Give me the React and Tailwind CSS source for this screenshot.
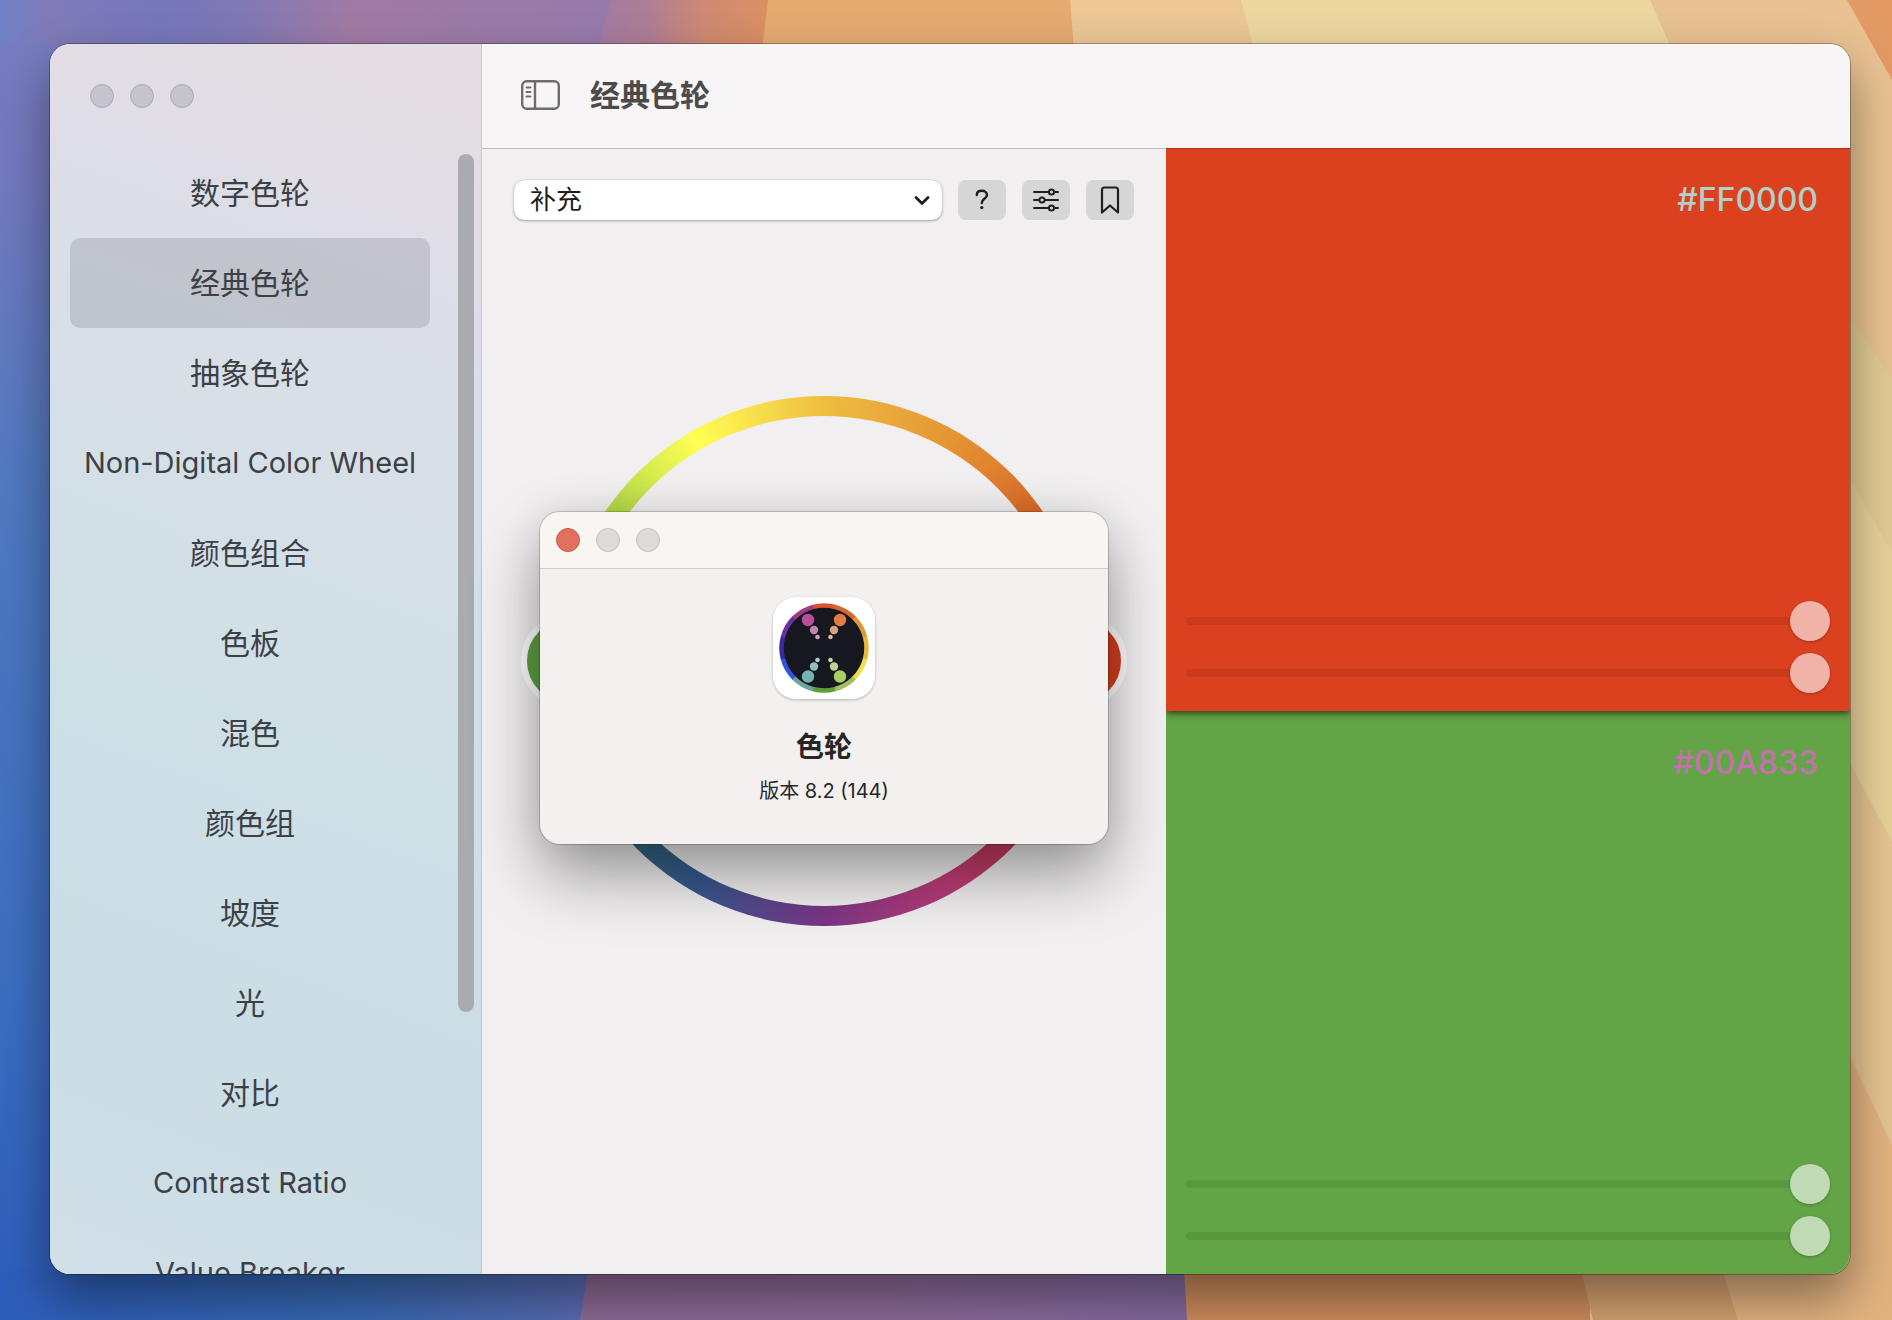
import React from 'react';

const sections = [
  '数字色轮',
  '经典色轮',
  '抽象色轮',
  'Non-Digital Color Wheel',
  '颜色组合',
  '色板',
  '混色',
  '颜色组',
  '坡度',
  '光',
  '对比',
  'Contrast Ratio',
  'Value Breaker',
];

const Wallpaper = () => (
  <svg className="absolute inset-0 w-full h-full" viewBox="0 0 1892 1320" preserveAspectRatio="none" aria-hidden="true">
    <defs>
      <linearGradient id="wpTop" x1="0" x2="1" y1="0" y2="0">
        <stop offset="0" stopColor="#6f80c4" />
        <stop offset="0.08" stopColor="#807ab8" />
        <stop offset="0.25" stopColor="#7677bc" />
        <stop offset="0.38" stopColor="#8078b4" />
        <stop offset="0.55" stopColor="#a07ba4" />
        <stop offset="1" stopColor="#957aac" />
      </linearGradient>
      <linearGradient id="wpDusk" x1="0" x2="1" y1="0" y2="0">
        <stop offset="0" stopColor="#a27ba2" />
        <stop offset="0.3" stopColor="#b07e94" />
        <stop offset="0.6" stopColor="#d08a72" />
        <stop offset="1" stopColor="#dd9160" />
      </linearGradient>
      <linearGradient id="wpLeft" x1="0" x2="0" y1="0" y2="1">
        <stop offset="0" stopColor="#767cbf" />
        <stop offset="0.1" stopColor="#7479be" />
        <stop offset="0.35" stopColor="#5079c0" />
        <stop offset="0.75" stopColor="#3b6dc0" />
        <stop offset="1" stopColor="#2d5dba" />
      </linearGradient>
      <linearGradient id="wpBottom" x1="0" x2="1" y1="0" y2="0">
        <stop offset="0" stopColor="#2d5dba" />
        <stop offset="0.6" stopColor="#3769b2" />
        <stop offset="1" stopColor="#5a6cb2" />
      </linearGradient>
      <linearGradient id="wpPurple" x1="0" x2="1" y1="0" y2="0">
        <stop offset="0" stopColor="#8c6a94" />
        <stop offset="0.5" stopColor="#8d6b98" />
        <stop offset="1" stopColor="#836aa0" />
      </linearGradient>
    </defs>
    <rect width="1892" height="1320" fill="#e8c292" />
    <rect width="640" height="60" fill="url(#wpTop)" />
    <path d="M0 44H60V1320H0Z" fill="url(#wpLeft)" />
    <path d="M0 1270H590V1320H0Z" fill="url(#wpBottom)" />
    <path d="M612 0H780V50H596Z" fill="url(#wpDusk)" />
    <path d="M768 0H1075V50H762Z" fill="#e5aa70" />
    <path d="M1070 0H1245L1255 50H1074Z" fill="#ebc795" />
    <path d="M1241 0H1650L1672 50H1254Z" fill="#edd7a0" />
    <path d="M1847 0H1892V80Z" fill="#e39a65" />
    <path d="M1840 300 1892 379V553L1840 460Z" fill="#e2cb96" />
    <path d="M1840 460 1892 553V842L1840 745Z" fill="#e8d29b" />
    <path d="M1840 745 1892 842V1145L1840 1035Z" fill="#e5c492" />
    <path d="M1840 1035 1892 1145V1320H1738L1720 1270H1840Z" fill="#e2b380" />
    <path d="M588 1270H1190V1320H580Z" fill="url(#wpPurple)" />
    <path d="M1184 1270H1590V1320H1187Z" fill="#cd8c5d" />
    <path d="M1581 1270H1722L1738 1320H1593Z" fill="#d4a26f" />
  </svg>
);

const Sidebar = () => (
  <aside className="w-[432px] shrink-0 flex flex-col border-r border-[#c4c7ce] bg-[linear-gradient(200deg,#e6dde4_0%,#e2dde5_12%,#dcdee7_20%,#d8dfe7_30%,#cddfe6_62%,#cbdde5_82%,#d1dfe7_100%)]">
    <div className="h-26 shrink-0 flex items-start gap-4 pl-10 pt-10">
      <button aria-label="关闭" className="size-6 rounded-full bg-[#c5c4ce] border border-[#abacb6]" />
      <button aria-label="最小化" className="size-6 rounded-full bg-[#c5c4ce] border border-[#abacb6]" />
      <button aria-label="缩放" className="size-6 rounded-full bg-[#c5c4ce] border border-[#abacb6]" />
    </div>
    <div className="relative flex-1 min-h-0 overflow-hidden">
      <nav className="pl-5 pr-[51px]">
        {sections.map((name) => (
          <a
            key={name}
            href="#"
            className={`h-[90px] flex items-center justify-center rounded-[10px] text-[30px] whitespace-nowrap text-[#3c4146] ${
              name === '经典色轮' ? 'bg-[#3c3c46]/16' : ''
            }`}
          >
            <span className={/^[A-Z]/.test(name) ? 'text-[29px]' : ''}>{name}</span>
          </a>
        ))}
      </nav>
      <div className="absolute right-[7px] top-1.5 bottom-[262px] w-4 rounded-full bg-[#a9abb1]" />
    </div>
  </aside>
);

const ToolButton = ({ label, children }) => (
  <button aria-label={label} className="w-12 h-10 rounded-lg bg-[#d6d6d6] text-[#1f1f1f] flex items-center justify-center">
    {children}
  </button>
);

const Toolbar = () => (
  <div className="flex items-center gap-4">
    <div className="relative flex-1">
      <select
        aria-label="配色方案"
        className="w-full h-10 appearance-none rounded-[10px] bg-white pl-4 pr-12 text-[26px] leading-8 text-[#1f1f1f] shadow-[0_0_1px_rgba(0,0,0,0.35),0_1px_3px_rgba(0,0,0,0.3)]"
      >
        <option>补充</option>
      </select>
      <svg className="absolute right-3 top-3 size-4 pointer-events-none" viewBox="0 0 16 16" fill="none" stroke="#1f1f1f" strokeWidth="2.8" strokeLinecap="round" strokeLinejoin="round">
        <path d="M2 5.5 8 11.5 14 5.5" />
      </svg>
    </div>
    <ToolButton label="帮助">
      <svg width="14" height="22" viewBox="0 0 14 22" fill="none" stroke="currentColor" strokeWidth="2.4" strokeLinecap="round" strokeLinejoin="round">
        <path d="M1.8 6C1.8 3.2 4 1.8 6.8 1.8S12 3.4 12 6C12 9.6 6.8 9.4 6.8 14" />
        <circle cx="6.8" cy="18.6" r="1.6" fill="currentColor" stroke="none" />
      </svg>
    </ToolButton>
    <ToolButton label="调整">
      <svg width="28" height="24" viewBox="0 0 28 24" fill="none" stroke="currentColor" strokeWidth="2" strokeLinecap="round">
        <path d="M2 4H16.5M22.5 4H26M2 12H7M13 12H26M2 20H16.5M22.5 20H26" />
        <circle cx="19.5" cy="4" r="2.6" />
        <circle cx="10" cy="12" r="2.6" />
        <circle cx="19.5" cy="20" r="2.6" />
      </svg>
    </ToolButton>
    <ToolButton label="收藏">
      <svg width="20" height="30" viewBox="0 0 20 30" fill="none" stroke="currentColor" strokeWidth="2.2" strokeLinejoin="round">
        <path d="M4.5 2.5H15.5Q18 2.5 18 5V27.5L10 20.5 2 27.5V5Q2 2.5 4.5 2.5Z" />
      </svg>
    </ToolButton>
  </div>
);

const Wheel = () => (
  <div className="relative size-[530px]">
    <div className="size-full rounded-full bg-[conic-gradient(#efbd41_0deg,#e59433_30deg,#d9622a_60deg,#da401f_90deg,#cd3c48_120deg,#c03c76_150deg,#7a3585_180deg,#345a90_210deg,#3a7476_240deg,#62a446_270deg,#b0d848_305deg,#ffff54_330deg,#efbd41_360deg)] p-5">
      <div className="size-full rounded-full bg-[#f1eff0]" />
    </div>
    <div className="absolute -left-[38px] top-[217px] size-24 rounded-full border-[6px] border-white bg-[#5ea043]" />
    <div className="absolute -right-[38px] top-[217px] size-24 rounded-full border-[6px] border-white bg-[#d53e1e]" />
  </div>
);

const iconRing = ['#d9532f', '#d9652f', '#e0953a', '#e8b840', '#ebe04a', '#a3bf5c', '#5f9e3c', '#6fa3a0', '#2f55e0', '#3a2a9c', '#6a2fa0', '#a03a86'];
const iconDots = [
  [35, 23, 6.2, '#b84f9a'],
  [41, 33, 4.2, '#c583b4'],
  [44.5, 40, 2.3, '#d2a0c6'],
  [67, 23, 6.2, '#e07c45'],
  [61, 33, 4.2, '#e0a07a'],
  [57.5, 40, 2.3, '#e3b898'],
  [35, 79.5, 6.2, '#74b3ac'],
  [41, 69.5, 4.2, '#95bfbf'],
  [44.5, 63, 2.3, '#b0cdd0'],
  [67, 79.5, 6.2, '#a9ce68'],
  [61, 69.5, 4.2, '#bfd28c'],
  [57.5, 63, 2.3, '#c9d6a6'],
];

const AppIcon = () => (
  <svg className="size-[102px] rounded-[23px] bg-white shadow-[0_1px_3px_rgba(0,0,0,0.25)]" viewBox="0 0 102 102" aria-hidden="true">
    <circle cx="51" cy="51" r="42" fill="#171720" />
    <g fill="none" strokeWidth="4.5">
      {iconRing.map((color, i) => (
        <circle
          key={color}
          cx="51"
          cy="51"
          r="42.5"
          pathLength="360"
          stroke={color}
          strokeDasharray="30.5 329.5"
          transform={`rotate(${i * 30 - 105} 51 51)`}
        />
      ))}
    </g>
    {iconDots.map(([x, y, r, color]) => (
      <circle key={`${x}-${y}`} cx={x} cy={y} r={r} fill={color} />
    ))}
  </svg>
);

const AboutDialog = () => (
  <div
    role="dialog"
    aria-label="色轮"
    className="absolute left-1/2 top-[364px] w-[568px] -translate-x-1/2 overflow-hidden rounded-[20px] bg-[#f4f0ef] shadow-[0_0_1px_1px_rgba(0,0,0,0.2),0_32px_64px_rgba(0,0,0,0.36),0_0_40px_rgba(0,0,0,0.08)]"
  >
    <div className="h-[57px] flex items-center gap-4 pl-4 bg-[#f8f5f3] border-b border-[#cfcdcc]">
      <button aria-label="关闭" className="size-6 rounded-full bg-[#e2705f] border border-[#c9594a]" />
      <button aria-label="最小化" className="size-6 rounded-full bg-[#dedbda] border border-[#c2bfbe]" />
      <button aria-label="缩放" className="size-6 rounded-full bg-[#dedbda] border border-[#c2bfbe]" />
    </div>
    <div className="h-[275px] flex flex-col items-center pt-7 text-[#262626]">
      <AppIcon />
      <h2 className="mt-7 text-[28px] leading-10 font-bold">色轮</h2>
      <p className="mt-2 text-xl leading-8">版本 8.2 (144)</p>
    </div>
  </div>
);

const sliderClass =
  'w-full h-10 appearance-none bg-transparent [&::-webkit-slider-runnable-track]:h-2 [&::-webkit-slider-runnable-track]:rounded-full [&::-webkit-slider-thumb]:appearance-none [&::-webkit-slider-thumb]:size-10 [&::-webkit-slider-thumb]:-mt-4 [&::-webkit-slider-thumb]:rounded-full [&::-webkit-slider-thumb]:shadow-[0_1px_3px_rgba(0,0,0,0.25)]';

const Swatch = ({ hex, panel, text, slider }) => (
  <section className={`flex-1 flex flex-col justify-between px-5 pt-8 pb-[18px] ${panel}`}>
    <div className={`pr-3 text-right text-[32px] leading-10 font-medium ${text}`}>{hex}</div>
    <div className="flex flex-col gap-3">
      <input type="range" aria-label={`${hex} 饱和度`} defaultValue="100" className={`${sliderClass} ${slider}`} />
      <input type="range" aria-label={`${hex} 亮度`} defaultValue="100" className={`${sliderClass} ${slider}`} />
    </div>
  </section>
);

const App = () => {
  return (
    <div className="relative h-screen overflow-hidden pl-[50px] pr-[42px] pt-11 pb-[46px] font-['Inter','Noto_Sans_CJK_SC',sans-serif]">
      <Wallpaper />
      <div className="relative h-full flex overflow-hidden rounded-[20px] bg-[#f1eff0] shadow-[0_0_0_1px_rgba(0,0,0,0.28),0_24px_50px_rgba(0,0,0,0.42)]">
        <Sidebar />
        <div className="flex-1 min-w-0 flex flex-col">
          <header className="relative z-10 h-26 shrink-0 flex items-center gap-[30px] pl-[39px] pb-0.5 bg-[#f7f5f6] shadow-[0_1px_0_rgba(0,0,0,0.2)]">
            <button aria-label="切换边栏" className="text-[#6e6c6d]">
              <svg width="39" height="30" viewBox="0 0 39 30" fill="none" stroke="currentColor" strokeWidth="2.4" strokeLinecap="round">
                <rect x="1.2" y="1.2" width="36.6" height="27.6" rx="4.5" />
                <path d="M14 1.5V28.5" />
                <path d="M5.5 7.5H9.5M5.5 12H9.5M5.5 16.5H9.5" strokeWidth="2" />
              </svg>
            </button>
            <h1 className="text-[30px] leading-10 font-bold text-[#4c4a4b]">经典色轮</h1>
          </header>
          <main className="flex-1 min-h-0 grid grid-cols-2">
            <div className="relative flex flex-col px-8 pt-8">
              <Toolbar />
              <div className="flex justify-center pt-44">
                <Wheel />
              </div>
              <AboutDialog />
            </div>
            <div className="relative flex flex-col overflow-hidden">
              <Swatch
                hex="#FF0000"
                panel="relative bg-[#db401f] shadow-[0_1px_8px_rgba(0,0,0,0.8)]"
                text="text-[#b0d0c8]"
                slider="[&::-webkit-slider-runnable-track]:bg-[#cb3a1d] [&::-webkit-slider-thumb]:bg-[#f1b3a7]"
              />
              <Swatch
                hex="#00A833"
                panel="bg-[#62a446]"
                text="text-[#c273ad]"
                slider="[&::-webkit-slider-runnable-track]:bg-[#5a9840] [&::-webkit-slider-thumb]:bg-[#c0dab5]"
              />
            </div>
          </main>
        </div>
      </div>
    </div>
  );
};

export default App;
